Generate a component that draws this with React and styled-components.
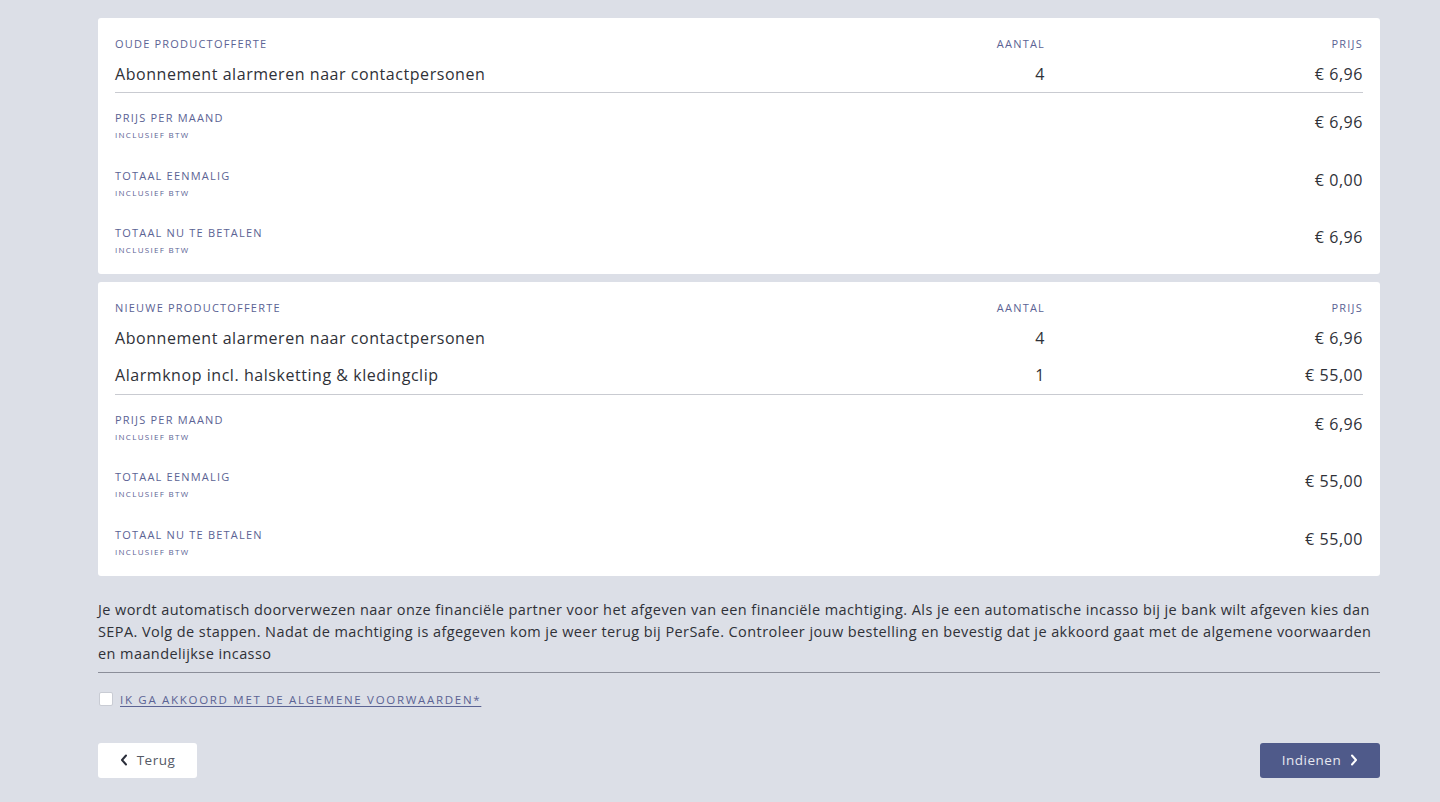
import React from "react";
import styled, { createGlobalStyle } from "styled-components";

const GlobalStyle = createGlobalStyle`
  html, body { margin: 0; padding: 0; }
  body {
    background: #dcdfe7;
    font-family: "Open Sans", "Liberation Sans", sans-serif;
    color: #2f3138;
  }
  * { box-sizing: border-box; }
`;

const Page = styled.div`
  width: 1282px;
  margin-left: 98px;
  padding: 18px 0 24px;
  display: flex;
  flex-direction: column;
`;

const Card = styled.section`
  background: #fff;
  border-radius: 3px;
  padding: 17px 17px 19px;
  margin-bottom: 8px;
`;

const Grid = styled.div`
  display: grid;
  grid-template-columns: 1fr 150px 318px;
  align-items: center;
`;

const HeadLabel = styled.div`
  font-size: 11px;
  letter-spacing: 1.2px;
  text-transform: uppercase;
  color: #5b6394;
  text-align: ${(p) => (p.$right ? "right" : "left")};
  line-height: 18px;
`;

const ItemCell = styled.div`
  font-size: 16px;
  letter-spacing: 0.55px;
  color: #2f3138;
  line-height: 37.5px;
  padding-top: 1px;
  margin-bottom: -1px;
  text-align: ${(p) => (p.$right ? "right" : "left")};
`;

const ItemRows = styled.div`
  border-bottom: 1px solid #c9cbd1;
  margin-top: 1.5px;
`;

const Totals = styled.div`
  display: flex;
  flex-direction: column;
  gap: 28.5px;
  margin-top: 18px;
`;

const TotalRow = styled.div`
  display: flex;
  justify-content: space-between;
  align-items: flex-start;
`;

const TotalLabels = styled.div`
  display: flex;
  flex-direction: column;
  gap: 5px;
`;

const TotalTitle = styled.div`
  font-size: 11px;
  letter-spacing: 1.2px;
  text-transform: uppercase;
  color: #5b6394;
  line-height: 14px;
`;

const TotalSub = styled.div`
  font-size: 8px;
  letter-spacing: 1.3px;
  text-transform: uppercase;
  color: #5b6394;
  line-height: 10px;
`;

const TotalValue = styled.div`
  font-size: 16px;
  letter-spacing: 0.55px;
  line-height: 20px;
  margin-top: 1px;
  color: #2f3138;
`;

const Note = styled.p`
  margin: 15px 0 0;
  font-size: 14.5px;
  line-height: 22px;
  letter-spacing: 0.42px;
  color: #2f3138;
  padding-bottom: 7px;
  border-bottom: 1px solid #8b8e99;
`;

const Agree = styled.label`
  display: flex;
  align-items: center;
  gap: 7px;
  margin-top: 19px;
  cursor: pointer;
`;

const Check = styled.span`
  width: 14px;
  height: 14px;
  background: #fff;
  border: 1px solid #c9ccd4;
  border-radius: 2px;
  margin-left: 1px;
`;

const AgreeText = styled.span`
  font-size: 11.5px;
  letter-spacing: 1.7px;
  text-transform: uppercase;
  color: #5b6394;
  text-decoration: underline;
  text-underline-offset: 2px;
`;

const Actions = styled.div`
  display: flex;
  justify-content: space-between;
  margin-top: 36px;
`;

const Button = styled.button`
  height: 35px;
  width: ${(p) => p.$w}px;
  display: flex;
  align-items: center;
  justify-content: center;
  gap: 9px;
  border: none;
  border-radius: 3px;
  font-family: inherit;
  font-size: 13.5px;
  letter-spacing: 0.5px;
  background: ${(p) => (p.$primary ? "#4f5a8a" : "#ffffff")};
  color: ${(p) => (p.$primary ? "#e6e8f0" : "#555a66")};
  cursor: pointer;
  padding: 0;
`;

const Chevron = ({ dir, color }) => (
  <svg width="8" height="12" viewBox="0 0 8 12">
    <path
      d={dir === "left" ? "M6 1.5 L2 6 L6 10.5" : "M2 1.5 L6 6 L2 10.5"}
      fill="none"
      stroke={color}
      strokeWidth="2"
      strokeLinecap="round"
      strokeLinejoin="round"
    />
  </svg>
);

const Offer = ({ title, items, totals }) => (
  <Card>
    <Grid>
      <HeadLabel>{title}</HeadLabel>
      <HeadLabel $right>Aantal</HeadLabel>
      <HeadLabel $right>Prijs</HeadLabel>
    </Grid>
    <ItemRows>
      {items.map((it) => (
        <Grid key={it.name}>
          <ItemCell>{it.name}</ItemCell>
          <ItemCell $right>{it.qty}</ItemCell>
          <ItemCell $right>{it.price}</ItemCell>
        </Grid>
      ))}
    </ItemRows>
    <Totals>
      {totals.map((t) => (
        <TotalRow key={t.label}>
          <TotalLabels>
            <TotalTitle>{t.label}</TotalTitle>
            <TotalSub>Inclusief BTW</TotalSub>
          </TotalLabels>
          <TotalValue>{t.value}</TotalValue>
        </TotalRow>
      ))}
    </Totals>
  </Card>
);

export default function App() {
  return (
    <>
      <GlobalStyle />
      <Page>
        <Offer
          title="Oude productofferte"
          items={[{ name: "Abonnement alarmeren naar contactpersonen", qty: 4, price: "€ 6,96" }]}
          totals={[
            { label: "Prijs per maand", value: "€ 6,96" },
            { label: "Totaal eenmalig", value: "€ 0,00" },
            { label: "Totaal nu te betalen", value: "€ 6,96" },
          ]}
        />
        <Offer
          title="Nieuwe productofferte"
          items={[
            { name: "Abonnement alarmeren naar contactpersonen", qty: 4, price: "€ 6,96" },
            { name: "Alarmknop incl. halsketting & kledingclip", qty: 1, price: "€ 55,00" },
          ]}
          totals={[
            { label: "Prijs per maand", value: "€ 6,96" },
            { label: "Totaal eenmalig", value: "€ 55,00" },
            { label: "Totaal nu te betalen", value: "€ 55,00" },
          ]}
        />
        <Note>
          Je wordt automatisch doorverwezen naar onze financiële partner voor het afgeven van een financiële machtiging. Als je een automatische incasso bij je bank wilt afgeven kies dan SEPA. Volg de stappen. Nadat de machtiging is afgegeven kom je weer terug bij PerSafe. Controleer jouw bestelling en bevestig dat je akkoord gaat met de algemene voorwaarden en maandelijkse incasso
        </Note>
        <Agree>
          <Check />
          <AgreeText>Ik ga akkoord met de algemene voorwaarden*</AgreeText>
        </Agree>
        <Actions>
          <Button $w={99}>
            <Chevron dir="left" color="#2b2e3a" />
            Terug
          </Button>
          <Button $w={120} $primary>
            Indienen
            <Chevron dir="right" color="#ffffff" />
          </Button>
        </Actions>
      </Page>
    </>
  );
}
